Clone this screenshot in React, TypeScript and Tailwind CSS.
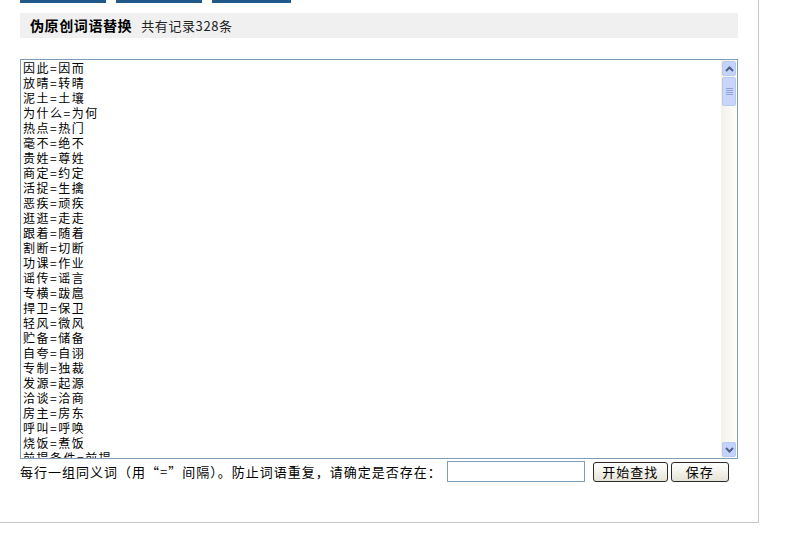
const LINES = [
  "因此=因而",
  "放晴=转晴",
  "泥土=土壤",
  "为什么=为何",
  "热点=热门",
  "毫不=绝不",
  "贵姓=尊姓",
  "商定=约定",
  "活捉=生擒",
  "恶疾=顽疾",
  "逛逛=走走",
  "跟着=随着",
  "割断=切断",
  "功课=作业",
  "谣传=谣言",
  "专横=跋扈",
  "捍卫=保卫",
  "轻风=微风",
  "贮备=储备",
  "自夸=自诩",
  "专制=独裁",
  "发源=起源",
  "洽谈=洽商",
  "房主=房东",
  "呼叫=呼唤",
  "烧饭=煮饭",
  "前提条件=前提",
];

const font = { fontFamily: '"Noto Sans CJK SC", "Liberation Sans", sans-serif' };

// Old XP-style scrollbar, drawn by hand so it looks like the screenshot.
function Scrollbar() {
  return (
    <div className="w-[16px] flex flex-col bg-gradient-to-r from-[#f3f1ea] to-[#fdfdfb] py-[1px]">
      <div className="h-[15px] mx-[1px] rounded-[2px] border border-[#b8c9ef] bg-[#c3d3fd] flex items-center justify-center">
        <svg width="9" height="6" viewBox="0 0 9 6">
          <path d="M1 5 L4.5 1.5 L8 5" stroke="#4d6185" strokeWidth="2" fill="none" />
        </svg>
      </div>
      <div className="h-[29px] mx-[1px] mt-[1px] rounded-[2px] border border-[#b8c9ef] bg-[#c8d6fc] flex flex-col items-center justify-center gap-[1px]">
        <div className="w-[7px] h-px bg-[#8ea3d6]" />
        <div className="w-[7px] h-px bg-[#8ea3d6]" />
        <div className="w-[7px] h-px bg-[#8ea3d6]" />
        <div className="w-[7px] h-px bg-[#8ea3d6]" />
      </div>
      <div className="flex-1" />
      <div className="h-[15px] mx-[1px] rounded-[2px] border border-[#b8c9ef] bg-[#c3d3fd] flex items-center justify-center">
        <svg width="9" height="6" viewBox="0 0 9 6">
          <path d="M1 1 L4.5 4.5 L8 1" stroke="#4d6185" strokeWidth="2" fill="none" />
        </svg>
      </div>
    </div>
  );
}

function XpButton({ label, w }: { label: string; w: string }) {
  return (
    <button
      className={`${w} h-[20px] rounded-[3px] border border-[#2b2b2b] bg-gradient-to-b from-white to-[#e6e3d6] text-[13px] leading-[18px] tracking-[1px] text-black`}
      style={font}
    >
      {label}
    </button>
  );
}

export default function App() {
  return (
    <div className="w-[797px] h-[549px] bg-white overflow-hidden" style={font}>
      <div className="w-[759px] h-[523px] border-r border-b border-[#c8c8c8]">
        {/* tab strip, only the bottom edge is visible */}
        <div className="flex gap-[10px] pl-[20px] h-[3px]">
          <div className="w-[86px] bg-[#1f5a8b]" />
          <div className="w-[86px] bg-[#1f5a8b]" />
          <div className="w-[79px] bg-[#1f5a8b]" />
        </div>

        <div className="ml-[20px] mt-[10px] w-[718px] h-[25px] bg-[#f0f0f0] flex items-center pl-[10px] gap-[9px]">
          <span className="text-[14px] font-bold tracking-[0.6px] text-black">伪原创词语替换</span>
          <span className="text-[13px] tracking-[0.6px] text-[#222]">共有记录328条</span>
        </div>

        <div className="ml-[20px] mt-[21px] w-[718px] h-[400px] border border-[#7f9db9] flex">
          <div className="flex-1 overflow-hidden pl-[2px]">
            {LINES.map((l) => (
              <div key={l} className="text-[12px] leading-[15px] tracking-[1.5px] text-black whitespace-nowrap">
                {l}
              </div>
            ))}
          </div>
          <Scrollbar />
        </div>

        <div className="ml-[20px] mt-[2px] flex items-center h-[21px]">
          <span className="text-[13px] tracking-[1px] text-black whitespace-nowrap">
            每行一组同义词（用“=”间隔）。防止词语重复，请确定是否存在：
          </span>
          <input className="ml-[5px] w-[138px] h-[21px] border border-[#7f9db9] bg-white outline-none" />
          <div className="ml-[8px] flex gap-[3px]">
            <XpButton label="开始查找" w="w-[75px]" />
            <XpButton label="保存" w="w-[58px]" />
          </div>
        </div>
      </div>
    </div>
  );
}
